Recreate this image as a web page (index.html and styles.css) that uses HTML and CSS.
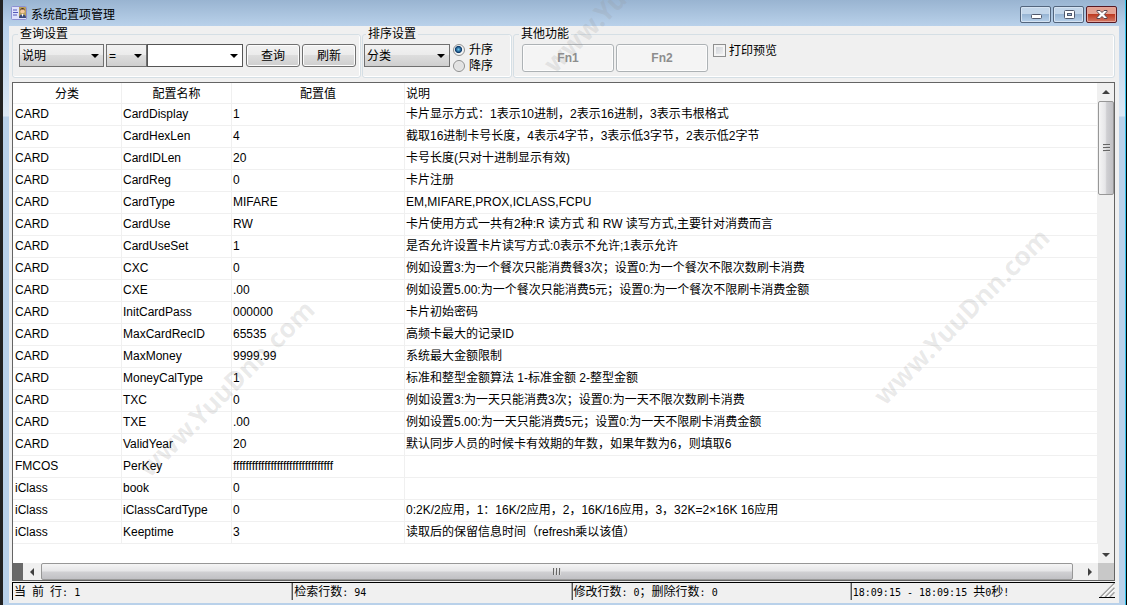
FILE: index.html
```html
<!DOCTYPE html>
<html lang="zh-CN">
<head>
<meta charset="utf-8">
<title>系统配置项管理</title>
<link rel="stylesheet" href="styles.css">
</head>
<body>
<div class="window">
  <header class="titlebar">
    <svg class="app-icon" width="16" height="14" viewBox="0 0 16 14" aria-hidden="true">
      <rect x="0.5" y="0.5" width="15" height="13" rx="1" fill="#dfe2fb" stroke="#8d8fd0"/>
      <path d="M2 4h4M2 6.5h5M2 9h4" stroke="#5558b8"/>
      <rect x="8" y="1" width="7" height="11" fill="#b9a05c"/>
      <circle cx="11.5" cy="5" r="2.4" fill="#f3c79c"/>
      <path d="M9 5c0-4 5-4 5 0l-1-1.500h-3z" fill="#4a2c16"/>
      <path d="M8 12c0-5 7-5 7 0z" fill="#3a4a7c"/>
      <path d="M10.500 8h2l-1 3z" fill="#fff"/>
    </svg>
    <h1 class="title">系统配置项管理</h1>
    <div class="caption-buttons">
      <button class="caption" type="button" aria-label="最小化"><svg width="12" height="10" viewBox="0 0 12 10"><rect x="1.500" y="4.500" width="10" height="4" rx="1" fill="#fff" stroke="#50586c"/></svg></button>
      <button class="caption" type="button" aria-label="最大化"><svg width="12" height="10" viewBox="0 0 12 10"><rect x="1.500" y="0.500" width="10" height="8" rx="1" fill="#fff" stroke="#50586c"/><rect x="4.500" y="3.500" width="4" height="2" fill="#9fbcdc" stroke="#50586c"/></svg></button>
      <button class="caption close" type="button" aria-label="关闭"><svg width="12" height="10" viewBox="0 0 12 10"><path d="M1 .5h3l2 2 2-2h3v1L8.300 4.500 11 7.500v1H8l-2-2-2 2H1v-1l2.700-3L1 1.500z" fill="#fff" stroke="#54434e"/></svg></button>
    </div>
  </header>
  <main class="client">
    <form class="toolbar">
      <fieldset class="group">
        <legend>查询设置</legend>
        <div class="controls query">
          <div class="combo field"><select aria-label="查询字段"><option>说明</option></select><svg class="arrow" width="8" height="4" viewBox="0 0 8 4"><path d="M0 0h8L4 4z"/></svg></div>
          <div class="combo operator"><select aria-label="比较方式"><option>=</option></select><svg class="arrow" width="8" height="4" viewBox="0 0 8 4"><path d="M0 0h8L4 4z"/></svg></div>
          <div class="combo keyword"><input type="text" aria-label="查询内容"><svg class="arrow" width="8" height="4" viewBox="0 0 8 4"><path d="M0 0h8L4 4z"/></svg></div>
          <button class="push" type="button">查询</button>
          <button class="push" type="button">刷新</button>
        </div>
      </fieldset>
      <fieldset class="group narrow">
        <legend>排序设置</legend>
        <div class="controls sort">
          <div class="combo category"><select aria-label="排序字段"><option>分类</option></select><svg class="arrow" width="8" height="4" viewBox="0 0 8 4"><path d="M0 0h8L4 4z"/></svg></div>
          <div class="radios">
            <label><input type="radio" name="order" checked>升序</label>
            <label><input type="radio" name="order">降序</label>
          </div>
        </div>
      </fieldset>
      <fieldset class="group wide">
        <legend>其他功能</legend>
        <div class="controls extra">
          <button class="push fn" type="button" disabled>Fn1</button>
          <button class="push fn" type="button" disabled>Fn2</button>
          <label class="preview"><input type="checkbox">打印预览</label>
        </div>
      </fieldset>
    </form>

    <section class="grid">
      <div class="sheet">
        <table>
          <colgroup><col class="c1"><col class="c2"><col class="c3"><col></colgroup>
          <thead><tr><th>分类</th><th>配置名称</th><th>配置值</th><th class="left">说明</th></tr></thead>
          <tbody>
            <tr><td>CARD</td><td>CardDisplay</td><td>1</td><td>卡片显示方式：1表示10进制，2表示16进制，3表示韦根格式</td></tr>
            <tr><td>CARD</td><td>CardHexLen</td><td>4</td><td>截取16进制卡号长度，4表示4字节，3表示低3字节，2表示低2字节</td></tr>
            <tr><td>CARD</td><td>CardIDLen</td><td>20</td><td>卡号长度(只对十进制显示有效)</td></tr>
            <tr><td>CARD</td><td>CardReg</td><td>0</td><td>卡片注册</td></tr>
            <tr><td>CARD</td><td>CardType</td><td>MIFARE</td><td>EM,MIFARE,PROX,ICLASS,FCPU</td></tr>
            <tr><td>CARD</td><td>CardUse</td><td>RW</td><td>卡片使用方式一共有2种:R 读方式 和 RW 读写方式,主要针对消费而言</td></tr>
            <tr><td>CARD</td><td>CardUseSet</td><td>1</td><td>是否允许设置卡片读写方式:0表示不允许;1表示允许</td></tr>
            <tr><td>CARD</td><td>CXC</td><td>0</td><td>例如设置3:为一个餐次只能消费餐3次；设置0:为一个餐次不限次数刷卡消费</td></tr>
            <tr><td>CARD</td><td>CXE</td><td>.00</td><td>例如设置5.00:为一个餐次只能消费5元；设置0:为一个餐次不限刷卡消费金额</td></tr>
            <tr><td>CARD</td><td>InitCardPass</td><td>000000</td><td>卡片初始密码</td></tr>
            <tr><td>CARD</td><td>MaxCardRecID</td><td>65535</td><td>高频卡最大的记录ID</td></tr>
            <tr><td>CARD</td><td>MaxMoney</td><td>9999.99</td><td>系统最大金额限制</td></tr>
            <tr><td>CARD</td><td>MoneyCalType</td><td>1</td><td>标准和整型金额算法 1-标准金额 2-整型金额</td></tr>
            <tr><td>CARD</td><td>TXC</td><td>0</td><td>例如设置3:为一天只能消费3次；设置0:为一天不限次数刷卡消费</td></tr>
            <tr><td>CARD</td><td>TXE</td><td>.00</td><td>例如设置5.00:为一天只能消费5元；设置0:为一天不限刷卡消费金额</td></tr>
            <tr><td>CARD</td><td>ValidYear</td><td>20</td><td>默认同步人员的时候卡有效期的年数，如果年数为6，则填取6</td></tr>
            <tr><td>FMCOS</td><td>PerKey</td><td>ffffffffffffffffffffffffffffffff</td><td></td></tr>
            <tr><td>iClass</td><td>book</td><td>0</td><td></td></tr>
            <tr><td>iClass</td><td>iClassCardType</td><td>0</td><td>0:2K/2应用，1：16K/2应用，2，16K/16应用，3，32K=2×16K 16应用</td></tr>
            <tr><td>iClass</td><td>Keeptime</td><td>3</td><td>读取后的保留信息时间（refresh乘以该值）</td></tr>
          </tbody>
        </table>
      </div>
      <div class="vbar">
        <button type="button" aria-label="向上滚动"><svg width="8" height="4" viewBox="0 0 8 4"><path d="M0 4h8L4 0z"/></svg></button>
        <div class="vthumb"><i></i><i></i><i></i></div>
        <button class="end" type="button" aria-label="向下滚动"><svg width="8" height="4" viewBox="0 0 8 4"><path d="M0 0h8L4 4z"/></svg></button>
      </div>
      <div class="hbar">
        <span class="split"></span>
        <button type="button" aria-label="向左滚动"><svg width="4" height="8" viewBox="0 0 4 8"><path d="M4 0v8L0 4z"/></svg></button>
        <div class="hthumb"><i></i><i></i><i></i></div>
        <button type="button" aria-label="向右滚动"><svg width="4" height="8" viewBox="0 0 4 8"><path d="M0 0v8l4-4z"/></svg></button>
      </div>
      <div class="corner"></div>
    </section>

    <footer class="status">
      <div>当<span> </span>前<span> </span>行<span>: 1</span></div>
      <div>检索行数<span>: 94</span></div>
      <div>修改行数<span>: 0</span>；删除行数<span>: 0</span></div>
      <div><span>18:09:15 - 18:09:15 </span>共<span>0</span>秒<span>!</span></div>
      <svg class="grip" width="16" height="15" viewBox="0 0 16 15" aria-hidden="true"><path d="M1 15L16 0M6 15l10-10M11 15l5-5" stroke="#a0a0a0" stroke-width="1.500"/><path d="M3 15L16 2M8 15l8-8" stroke="#fff"/></svg>
    </footer>
  </main>
</div>
<div class="watermark wm-left" aria-hidden="true">www.YuuDnn.com</div>
<div class="watermark wm-right" aria-hidden="true">www.YuuDnn.com</div>
<div class="watermark wm-top" aria-hidden="true">www.YuuDnn.com</div>
</body>
</html>
```
FILE: styles.css
```css
* { box-sizing: border-box; }

body {
  margin: 0;
  height: 100vh;
  overflow: hidden;
  position: relative;
  background: #fff;
  color: #000;
  font: 12px/14px "Liberation Sans", "Noto Sans CJK SC", sans-serif;
}

button, input, select { font: inherit; color: inherit; margin: 0; }

.window {
  height: 100%;
  display: flex;
  flex-direction: column;
  margin-right: 2px;
  padding: 0 7px 2px 6px;
  border-left: 3px solid #222;
  border-right: 1px solid #000;
  box-shadow: inset -1px 0 #35c3ea;
  background: linear-gradient(#99b4d1, #b9d1ea 26px, #dce8f5 116px, #b9d1ea 117px);
}

.titlebar {
  display: flex;
  align-items: center;
  gap: 4px;
  height: 26px;
  padding: 0 2px;
  flex: none;
}
.title { flex: 1; margin: 0; padding-top: 3px; font-size: 12px; font-weight: 400; }
.caption-buttons { display: flex; gap: 2px; padding-top: 3px; }
.caption {
  display: grid;
  place-items: center;
  width: 31px;
  height: 17px;
  padding: 0;
  border: 1px solid #53657d;
  border-radius: 2px;
  box-shadow: inset 0 0 0 1px #d5e3f2;
  background: linear-gradient(#c3d6ea 45%, #98b5d4 50%, #b6d0ea);
}
.caption.close {
  border-color: #571a24;
  box-shadow: inset 0 0 0 1px #e6a59a;
  background: linear-gradient(#e3a293 45%, #bd3b22 50%, #d47a66);
}

.client {
  flex: 1;
  min-height: 0;
  display: flex;
  flex-direction: column;
  padding: 1px 4px 3px 3px;
  background: #f0f0f0;
}

.toolbar { display: flex; gap: 1px; margin-bottom: 4px; }
.group {
  margin: 0;
  padding: 3px 4px 5px 5px;
  min-width: 0;
  border: 1px solid #d5dfe5;
  border-radius: 3px;
  box-shadow: inset 0 -1px #fff, inset -1px 0 #fff;
}
.group.narrow { padding-left: 3px; }
.group.wide { flex: 1; }
legend { padding: 0 2px; }
.controls { display: flex; align-items: flex-start; height: 28px; }
.query, .extra { gap: 2px; }
.query { padding-left: 1px; }
.extra { padding-left: 3px; }
.sort { gap: 3px; padding-right: 14px; margin-left: -2px; }

.combo { position: relative; height: 23px; }
.combo select, .combo input {
  display: block;
  width: 100%;
  height: 100%;
  padding: 0 16px 0 2px;
  border: 1px solid #707070;
  border-radius: 0;
  appearance: none;
  background: linear-gradient(#f2f2f2, #ebebeb 50%, #dddddd 50%, #cfcfcf);
}
.combo input { background: #fff; border-color: #555; }
.arrow { position: absolute; right: 5px; top: 10px; pointer-events: none; }
.field { width: 85px; }
.operator { width: 41px; }
.keyword { width: 96px; margin-left: -2px; }
.category { width: 86px; }

.push {
  width: 54px;
  height: 23px;
  padding: 0;
  border: 1px solid #707070;
  border-radius: 3px;
  box-shadow: inset 0 0 0 1px #fcfcfc;
  background: linear-gradient(#f2f2f2, #ebebeb 50%, #dddddd 50%, #cfcfcf);
}
.push.fn {
  width: 92px;
  height: 28px;
  border-color: #adb2b5;
  background: #f4f4f4;
  color: #8d8d8d;
  font-weight: 700;
}
.keyword + .push { margin-left: 1px; }

.radios { display: grid; gap: 2px; margin-top: -1px; }
.radios label, .preview { display: flex; align-items: center; height: 14px; }
.radios label { gap: 4px; }
.preview { gap: 3px; margin-left: 3px; align-items: flex-start; }
input[type="radio"], input[type="checkbox"] {
  appearance: none;
  width: 12px;
  height: 12px;
  border: 1px solid #8e8f8f;
}
input[type="radio"] { border-radius: 50%; background: radial-gradient(#e2e2e2 50%, #fafafa); }
input[type="radio"]:checked { background: radial-gradient(circle at 45% 45%, #6fc8f0, #0b3a6c 40%, #f4f4f4 52%); }
input[type="checkbox"] {
  width: 13px;
  height: 13px;
  box-shadow: inset 0 0 0 2px #f4f4f4;
  background: linear-gradient(135deg, #cbcfd5, #f4f4f4);
}

.grid {
  flex: 1;
  min-height: 0;
  display: grid;
  grid-template: minmax(0, 1fr) 17px / minmax(0, 1fr) 16px;
  border: 1px solid #646464;
  background: #fff;
}
.sheet { overflow: hidden; }
table { width: 100%; table-layout: fixed; border-collapse: separate; border-spacing: 0; }
.c1 { width: 109px; }
.c2 { width: 110px; }
.c3 { width: 173px; }
th, td {
  height: 22px;
  padding: 0 1px 2px;
  border-right: 1px solid #f0f0f0;
  border-bottom: 1px solid #f0f0f0;
  font-weight: 400;
  text-align: left;
  white-space: nowrap;
}
th { height: 21px; padding: 1px 1px 0; text-align: center; }
th.left { text-align: left; }
td:first-child { padding-left: 2px; }

.vbar, .hbar { display: flex; background: #f0f0f0; }
.vbar { flex-direction: column; }
.vbar button, .hbar button {
  flex: none;
  display: grid;
  place-items: center;
  width: 16px;
  height: 17px;
  padding: 0;
  border: 0;
  background: none;
}
.vbar svg, .hbar svg { fill: #404040; }
.vthumb, .hthumb {
  display: flex;
  align-items: center;
  justify-content: center;
  gap: 1px;
  border: 1px solid #979797;
  border-radius: 2px;
}
.vthumb { flex-direction: column; height: 94px; margin-top: 1px; background: linear-gradient(90deg, #f5f5f5, #e6e6e8 45%, #cfcfd2 55%, #c0c0c4); }
.vthumb i { width: 7px; height: 2px; background: #666; border-bottom: 1px solid #ddd; }
.end { margin-top: auto; }
.hthumb { flex: 1; background: linear-gradient(#f5f5f5, #e6e6e8 45%, #cfcfd2 55%, #c0c0c4); }
.hthumb i { width: 2px; height: 7px; background: #666; border-right: 1px solid #ddd; }
.split { width: 10px; background: #696969; }
.hbar button { width: 18px; }
.hbar button:last-child { width: 25px; padding-left: 8px; }
.corner { background: #c8c8c8; }

.status {
  display: grid;
  grid-template-columns: 279fr 279fr 279fr 248fr 16px;
  align-items: stretch;
  height: 18px;
  margin-top: 1px;
  border-top: 1px solid #000;
  border-left: 1px solid #000;
}
.status div { padding: 2px 1px 0; white-space: pre; overflow: hidden; }
.status div + div { border-left: 1px solid #555; box-shadow: -1px 0 #aaa; }
.status span { font: 10px/14px "DejaVu Sans Mono", monospace; }
.grip { border-bottom: 1px solid #000; }

.watermark {
  position: absolute;
  color: rgba(90, 90, 90, .13);
  font: 700 26px/28px "Noto Sans", sans-serif;
  transform: translate(-50%, -50%) rotate(-45deg);
  pointer-events: none;
  white-space: nowrap;
}
.wm-left { left: 226px; top: 388px; }
.wm-right { left: 961px; top: 316px; }
.wm-top { left: 631px; top: -16px; color: rgba(150, 150, 150, .2); }
```
